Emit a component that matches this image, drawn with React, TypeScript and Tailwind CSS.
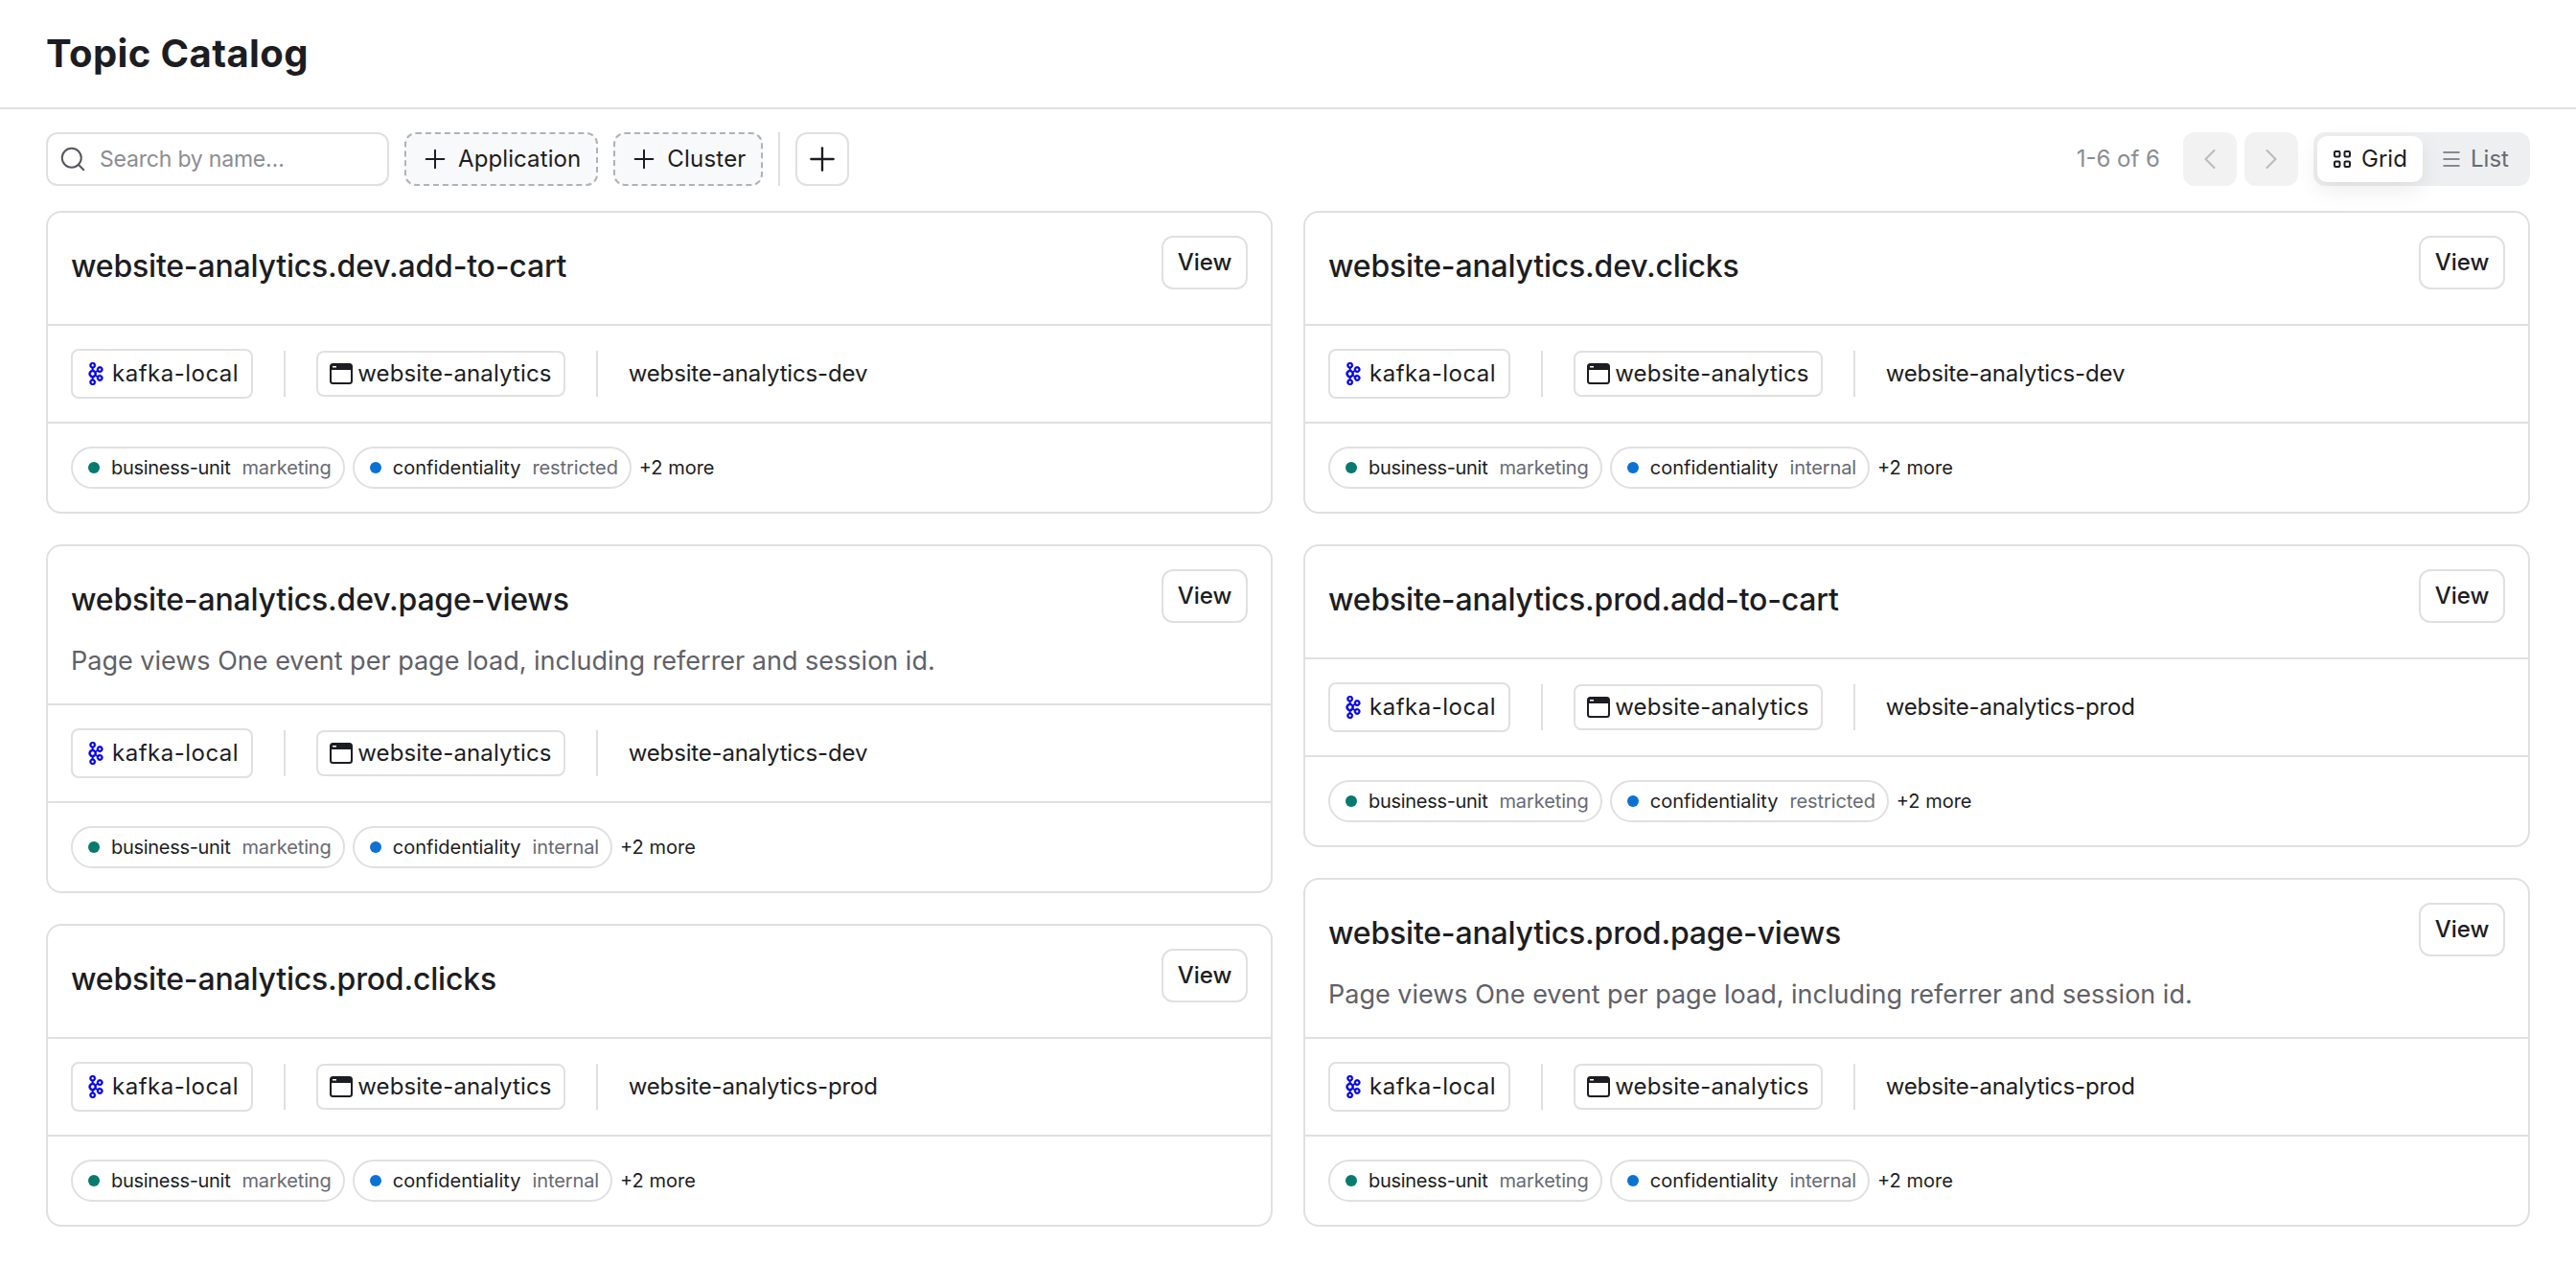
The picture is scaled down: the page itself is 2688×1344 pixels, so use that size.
import React from "react";
import { ChevronLeft, ChevronRight, Menu, Plus, Search } from "lucide-react";
import { SiApachekafka } from "react-icons/si";

type Topic = {
  name: string;
  description?: string;
  group: string;
  confidentiality: string;
};

const leftTopics: Topic[] = [
  { name: "website-analytics.dev.add-to-cart", group: "website-analytics-dev", confidentiality: "restricted" },
  {
    name: "website-analytics.dev.page-views",
    description: "Page views One event per page load, including referrer and session id.",
    group: "website-analytics-dev",
    confidentiality: "internal",
  },
  { name: "website-analytics.prod.clicks", group: "website-analytics-prod", confidentiality: "internal" },
];

const rightTopics: Topic[] = [
  { name: "website-analytics.dev.clicks", group: "website-analytics-dev", confidentiality: "internal" },
  { name: "website-analytics.prod.add-to-cart", group: "website-analytics-prod", confidentiality: "restricted" },
  {
    name: "website-analytics.prod.page-views",
    description: "Page views One event per page load, including referrer and session id.",
    group: "website-analytics-prod",
    confidentiality: "internal",
  },
];

const WindowIcon = () => (
  <svg width="24" height="24" viewBox="0 0 24 24" className="shrink-0">
    <rect x="1" y="2" width="22" height="20" rx="2.5" fill="none" stroke="#1c1d22" strokeWidth="2" />
    <path d="M1 4.5A2.5 2.5 0 0 1 3.500 2h17A2.5 2.5 0 0 1 23 4.500V8H1z" fill="#1c1d22" />
    <rect x="3" y="4" width="4" height="1.500" fill="#fff" />
  </svg>
);

const GridIcon = () => (
  <svg width="24" height="24" viewBox="0 0 24 24" fill="none" stroke="#1c1d22" strokeWidth="2" className="shrink-0">
    <rect x="4" y="4" width="5.500" height="5.500" rx="1.200" />
    <rect x="14.500" y="4" width="5.500" height="5.500" rx="1.200" />
    <rect x="4" y="14.500" width="5.500" height="5.500" rx="1.200" />
    <rect x="14.500" y="14.500" width="5.500" height="5.500" rx="1.200" />
  </svg>
);

const Tag = ({ dot, label, value, tight }: { dot: string; label: string; value: string; tight?: boolean }) => (
  <div className="flex h-[44px] items-center gap-3 rounded-full border-2 border-[#e0e0e2] pl-4 pr-3 text-[20px] leading-none">
    <span className={`h-3 w-3 rounded-full ${dot}`} />
    <span className={`text-[#1c1d22] ${tight ? "tracking-[-0.3px]" : ""}`}>{label}</span>
    <span className="tracking-[-0.1px] text-[#666a73]">{value}</span>
  </div>
);

const TopicCard = ({ topic }: { topic: Topic }) => (
  <div className="rounded-2xl border-2 border-[#e0e0e2] bg-white">
    <div className={`flex items-start justify-between px-6 pt-6 ${topic.description ? "pb-5" : "pb-7"}`}>
      <div>
        <div className="flex h-16 items-center text-[32px] font-medium tracking-[-0.2px] text-[#1c1d22]">
          {topic.name}
        </div>
        {topic.description && (
          <div className="mt-2 h-12 text-[27px] leading-[48px] text-[#5f6168]">{topic.description}</div>
        )}
      </div>
      <button className="flex h-14 w-[90px] items-center justify-center rounded-xl border-2 border-[#e0e0e2] bg-white text-[24px] font-medium text-[#1c1d22]">
        View
      </button>
    </div>
    <div className="flex items-center gap-8 border-t-2 border-[#e0e0e2] p-6">
      <div className="flex h-[52px] items-center gap-[5px] rounded-lg border-2 border-[#e0e0e2] pl-3 pr-[13px] text-[24px] tracking-[0.5px] text-[#1c1d22]">
        <SiApachekafka stroke="currentColor" strokeWidth={0.6} className="h-6 w-6 shrink-0 text-[#0000e6]" />
        kafka-local
      </div>
      <div className="h-12 w-0.5 bg-[#e0e0e2]" />
      <div className="flex h-12 items-center gap-[5px] rounded-lg border-2 border-[#e0e0e2] px-3 text-[24px] tracking-[0.15px] text-[#1c1d22]">
        <WindowIcon />
        website-analytics
      </div>
      <div className="h-12 w-0.5 bg-[#e0e0e2]" />
      <div className="text-[24px] tracking-[-0.15px] text-[#1c1d22]">{topic.group}</div>
    </div>
    <div className="flex items-center gap-2 border-t-2 border-[#e0e0e2] p-6">
      <Tag dot="bg-[#067a6e]" label="business-unit" value="marketing" tight />
      <Tag dot="bg-[#0b72d4]" label="confidentiality" value={topic.confidentiality} />
      <span className="text-[20px] text-[#1c1d22]">+2 more</span>
    </div>
  </div>
);

const App = () => {
  return (
    <div className="min-h-[1344px] bg-white font-['Inter',sans-serif] text-[#1c1d22]">
      <header className="flex h-[114px] items-center border-b-2 border-[#e0e0e2] px-12">
        <h1 className="text-[40px] font-bold leading-none tracking-[0.4px]">Topic Catalog</h1>
      </header>

      <div className="flex items-center justify-between px-12 pt-6">
        <div className="flex items-center gap-4">
          <div className="flex h-14 w-[358px] items-center gap-[13px] rounded-xl border-2 border-[#e0e0e2] pl-[11px] pr-3">
            <Search size={30} strokeWidth={1.6} className="shrink-0 text-[#55585f]" />
            <input
              placeholder="Search by name…"
              className="w-full bg-transparent text-[23px] tracking-[-0.2px] outline-none placeholder:text-[#8b8d93]"
            />
          </div>
          <button className="flex h-14 items-center gap-2 rounded-xl border-2 border-dashed border-[#b0b2b6] bg-[#f8f9fb] pl-[14px] pr-4 text-[24px] tracking-[0.1px]">
            <Plus size={32} strokeWidth={1.5} />
            Application
          </button>
          <button className="flex h-14 items-center gap-2 rounded-xl border-2 border-dashed border-[#b0b2b6] bg-[#f8f9fb] pl-[14px] pr-[15px] text-[24px] tracking-[0.2px]">
            <Plus size={32} strokeWidth={1.5} />
            Cluster
          </button>
          <div className="h-14 w-0.5 bg-[#e0e0e2]" />
          <button className="flex h-14 w-14 items-center justify-center rounded-xl border-2 border-[#e0e0e2]">
            <Plus size={40} strokeWidth={1.4} />
          </button>
        </div>

        <div className="flex items-center">
          <span className="mr-6 text-[24px] text-[#8b8d93]">1-6 of 6</span>
          <button className="mr-2 flex h-14 w-14 items-center justify-center rounded-xl bg-[#f2f2f3] text-[#b9babd]">
            <ChevronLeft size={36} strokeWidth={1.4} />
          </button>
          <button className="mr-4 flex h-14 w-14 items-center justify-center rounded-xl bg-[#f2f2f3] text-[#b9babd]">
            <ChevronRight size={36} strokeWidth={1.4} />
          </button>
          <div className="flex h-14 w-[226px] items-center rounded-xl bg-[#eeeff1] p-1">
            <div className="flex h-12 w-[110px] items-center gap-2 rounded-[10px] bg-white pl-[14px] text-[24px] font-normal shadow-[0_8px_24px_rgba(0,0,0,0.08)]">
              <GridIcon />
              Grid
            </div>
            <div className="flex h-12 flex-1 items-center gap-2 pl-[18px] text-[24px] text-[#666a73]">
              <Menu size={24} strokeWidth={1.5} />
              List
            </div>
          </div>
        </div>
      </div>

      <div className="mt-[26px] grid grid-cols-2 items-start gap-8 px-12">
        <div className="flex flex-col gap-8">
          {leftTopics.map((t) => (
            <TopicCard key={t.name} topic={t} />
          ))}
        </div>
        <div className="flex flex-col gap-8">
          {rightTopics.map((t) => (
            <TopicCard key={t.name} topic={t} />
          ))}
        </div>
      </div>
    </div>
  );
};

export default App;
